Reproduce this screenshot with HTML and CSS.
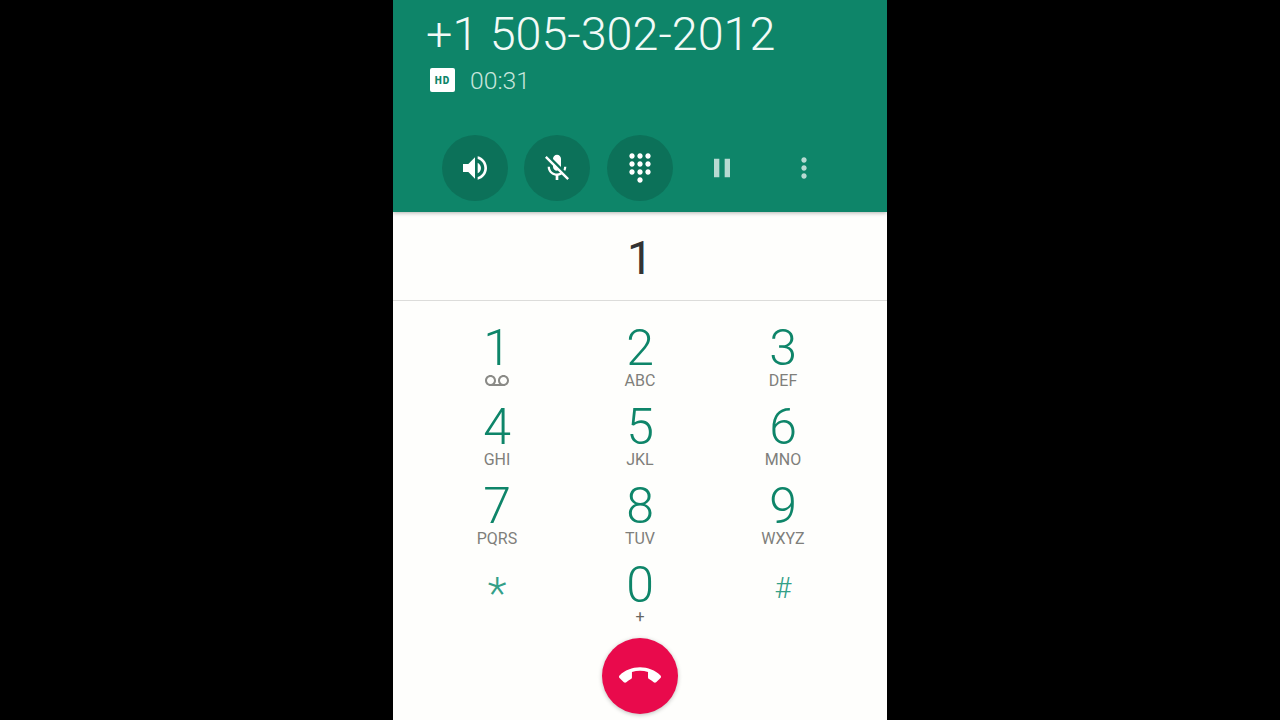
FILE: index.html
```html
<!DOCTYPE html>
<html lang="en">
<head>
<meta charset="utf-8">
<title>Call</title>
<link rel="stylesheet" href="styles.css">
</head>
<body>
<main class="phone">
  <header class="call-header">
    <div class="number">+1 505-302-2012</div>
    <div class="status">
      <span class="hd">HD</span>
      <span class="timer">00:31</span>
    </div>
    <div class="actions">
      <div class="action on"><svg class="icon" viewBox="0 0 24 24"><path d="M3 9v6h4l5 5V4L7 9H3zm13.5 3c0-1.77-1.02-3.29-2.5-4.03v8.05c1.48-.73 2.5-2.25 2.5-4.02zM14 3.23v2.06c2.89.86 5 3.54 5 6.71s-2.11 5.85-5 6.71v2.06c4.01-.91 7-4.49 7-8.77s-2.99-7.86-7-8.77z"/></svg></div>
      <div class="action on"><svg class="icon" viewBox="0 0 24 24"><path d="M19 11h-1.7c0 .74-.16 1.43-.43 2.05l1.23 1.23c.56-.98.9-2.09.9-3.28zm-4.02.17c0-.06.02-.11.02-.17V5c0-1.66-1.34-3-3-3S9 3.34 9 5v.18l5.98 5.99zM4.27 3L3 4.27l6.01 6.01V11c0 1.66 1.33 3 2.99 3 .22 0 .44-.03.65-.08l1.66 1.66c-.71.33-1.5.52-2.31.52-2.76 0-5.3-2.1-5.3-5.1H5c0 3.41 2.72 6.23 6 6.72V21h2v-3.28c.91-.13 1.77-.45 2.54-.9L19.73 21 21 19.73 4.27 3z"/></svg></div>
      <div class="action on"><svg class="icon" viewBox="0 0 24 24"><path d="M12 19c-1.1 0-2 .9-2 2s.9 2 2 2 2-.9 2-2-.9-2-2-2zM6 1c-1.1 0-2 .9-2 2s.9 2 2 2 2-.9 2-2-.9-2-2-2zm0 6c-1.1 0-2 .9-2 2s.9 2 2 2 2-.9 2-2-.9-2-2-2zm0 6c-1.1 0-2 .9-2 2s.9 2 2 2 2-.9 2-2-.9-2-2-2zm12-8c1.1 0 2-.9 2-2s-.9-2-2-2-2 .9-2 2 .9 2 2 2zm-6 8c-1.1 0-2 .9-2 2s.9 2 2 2 2-.9 2-2-.9-2-2-2zm6 0c-1.1 0-2 .9-2 2s.9 2 2 2 2-.9 2-2-.9-2-2-2zm0-6c-1.1 0-2 .9-2 2s.9 2 2 2 2-.9 2-2-.9-2-2-2zm-6 0c-1.1 0-2 .9-2 2s.9 2 2 2 2-.9 2-2-.9-2-2-2zm0-6c-1.1 0-2 .9-2 2s.9 2 2 2 2-.9 2-2-.9-2-2-2z"/></svg></div>
      <div class="action dim"><svg class="icon" viewBox="0 0 24 24"><path d="M6 19h4V5H6v14zm8-14v14h4V5h-4z"/></svg></div>
      <div class="action dim"><svg class="icon" viewBox="0 0 24 24"><path d="M12 8c1.1 0 2-.9 2-2s-.9-2-2-2-2 .9-2 2 .9 2 2 2zm0 2c-1.1 0-2 .9-2 2s.9 2 2 2 2-.9 2-2-.9-2-2-2zm0 6c-1.1 0-2 .9-2 2s.9 2 2 2 2-.9 2-2-.9-2-2-2z"/></svg></div>
    </div>
  </header>

  <div class="entry">1</div>

  <section class="keypad">
    <div class="key"><span class="digit">1</span><svg class="vm" viewBox="0 0 24 24"><path d="M18.5 6C15.46 6 13 8.46 13 11.5c0 1.33.47 2.55 1.26 3.5H9.74c.79-.95 1.26-2.17 1.26-3.5C11 8.46 8.54 6 5.5 6S0 8.46 0 11.5 2.46 17 5.5 17h13c3.04 0 5.5-2.46 5.5-5.5S21.54 6 18.5 6zm-13 9C3.57 15 2 13.43 2 11.5S3.57 8 5.5 8 9 9.57 9 11.5 7.43 15 5.5 15zm13 0c-1.93 0-3.5-1.57-3.5-3.5S16.57 8 18.5 8 22 9.57 22 11.5 20.43 15 18.5 15z"/></svg></div>
    <div class="key"><span class="digit">2</span><span class="letters">ABC</span></div>
    <div class="key"><span class="digit">3</span><span class="letters">DEF</span></div>
    <div class="key"><span class="digit">4</span><span class="letters">GHI</span></div>
    <div class="key"><span class="digit">5</span><span class="letters">JKL</span></div>
    <div class="key"><span class="digit">6</span><span class="letters">MNO</span></div>
    <div class="key"><span class="digit">7</span><span class="letters">PQRS</span></div>
    <div class="key"><span class="digit">8</span><span class="letters">TUV</span></div>
    <div class="key"><span class="digit">9</span><span class="letters">WXYZ</span></div>
    <div class="key"><span class="digit symbol">*</span></div>
    <div class="key"><span class="digit">0</span><span class="letters plus">+</span></div>
    <div class="key"><span class="digit symbol hash">#</span></div>
  </section>

  <div class="end-row">
    <div class="end"><svg class="end-icon" viewBox="0 0 24 24"><path d="M12 9c-1.6 0-3.15.25-4.6.72v3.1c0 .39-.23.74-.56.9-.98.49-1.87 1.12-2.66 1.85-.18.18-.43.28-.7.28-.28 0-.53-.11-.71-.29L.29 13.08c-.18-.17-.29-.42-.29-.7 0-.28.11-.53.29-.71C3.34 8.78 7.46 7 12 7s8.66 1.78 11.71 4.67c.18.18.29.43.29.71 0 .28-.11.53-.29.71l-2.48 2.48c-.18.18-.43.29-.71.29-.27 0-.52-.11-.7-.28-.79-.74-1.69-1.36-2.67-1.85-.33-.16-.56-.5-.56-.9v-3.1C15.15 9.25 13.6 9 12 9z"/></svg></div>
  </div>
</main>
</body>
</html>
```

FILE: styles.css
```css
* { box-sizing: border-box; }

html, body {
  margin: 0;
  height: 100%;
  background: #000;
  overflow: hidden;
}

body {
  display: flex;
  justify-content: center;
  font-family: Roboto, "Liberation Sans", sans-serif;
}

.phone {
  width: 494px;
  height: 720px;
  background: #fefefc;
  display: flex;
  flex-direction: column;
  overflow: hidden;
}

.call-header {
  height: 212px;
  flex: none;
  background: #0e8569;
  color: #fff;
  padding: 7px 0 0 33px;
  box-shadow: 0 1px 4px rgba(0, 0, 0, 0.3);
  position: relative;
  display: flex;
  flex-direction: column;
}

.number {
  font-size: 46.7px;
  font-weight: 300;
  line-height: 54px;
  color: #f2faf7;
}

.status {
  display: flex;
  align-items: center;
  gap: 15px;
  margin: 7px 0 0 4px;
  height: 24px;
}

.hd {
  width: 25px;
  height: 24px;
  background: #fff;
  border-radius: 2px;
  color: #0e8569;
  font-size: 10px;
  font-weight: 900;
  letter-spacing: 1px;
  display: flex;
  align-items: center;
  justify-content: center;
}

.timer {
  font-size: 24.7px;
  font-weight: 300;
  line-height: 26px;
  padding-top: 2px;
  color: #c8e6dc;
}

.actions {
  display: flex;
  gap: 16.4px;
  margin: 43px 0 0 15.8px;
}

.action {
  width: 66px;
  height: 66px;
  border-radius: 50%;
  display: flex;
  align-items: center;
  justify-content: center;
}

.action.on { background: #0c7159; }
.action.dim { opacity: 0.7; }

.icon {
  width: 32px;
  height: 32px;
  fill: #fff;
}

.entry {
  height: 89px;
  flex: none;
  padding-top: 3px;
  border-bottom: 1px solid #dcdcda;
  display: flex;
  align-items: center;
  justify-content: center;
  font-size: 46px;
  font-weight: 400;
  color: #333;
}

.keypad {
  display: grid;
  grid-template-columns: repeat(3, 143px);
  grid-template-rows: repeat(3, 79px) 78px;
  justify-content: center;
  padding-top: 22px;
}

.key {
  display: flex;
  flex-direction: column;
  align-items: center;
}

.digit {
  font-size: 50px;
  font-weight: 300;
  line-height: 50px;
  height: 50px;
  color: #0e8569;
}

.symbol {
  font-size: 44px;
  line-height: 68px;
  height: 68px;
  color: #33a088;
}

.hash {
  font-size: 29px;
  line-height: 56px;
  height: 56px;
}

.letters {
  font-size: 16px;
  line-height: 16px;
  color: #7f7f7b;
}

.plus {
  line-height: 14px;
  color: #666662;
}

.vm {
  width: 24px;
  height: 24px;
  fill: #8a8a86;
  margin-top: -4px;
}

.end-row {
  display: flex;
  justify-content: center;
}

.end {
  width: 76px;
  height: 76px;
  border-radius: 50%;
  background: #e90a4c;
  box-shadow: 0 1px 4px rgba(0, 0, 0, 0.25);
  display: flex;
  align-items: center;
  justify-content: center;
}

.end-icon {
  width: 42px;
  height: 42px;
  fill: #fff;
}
```
